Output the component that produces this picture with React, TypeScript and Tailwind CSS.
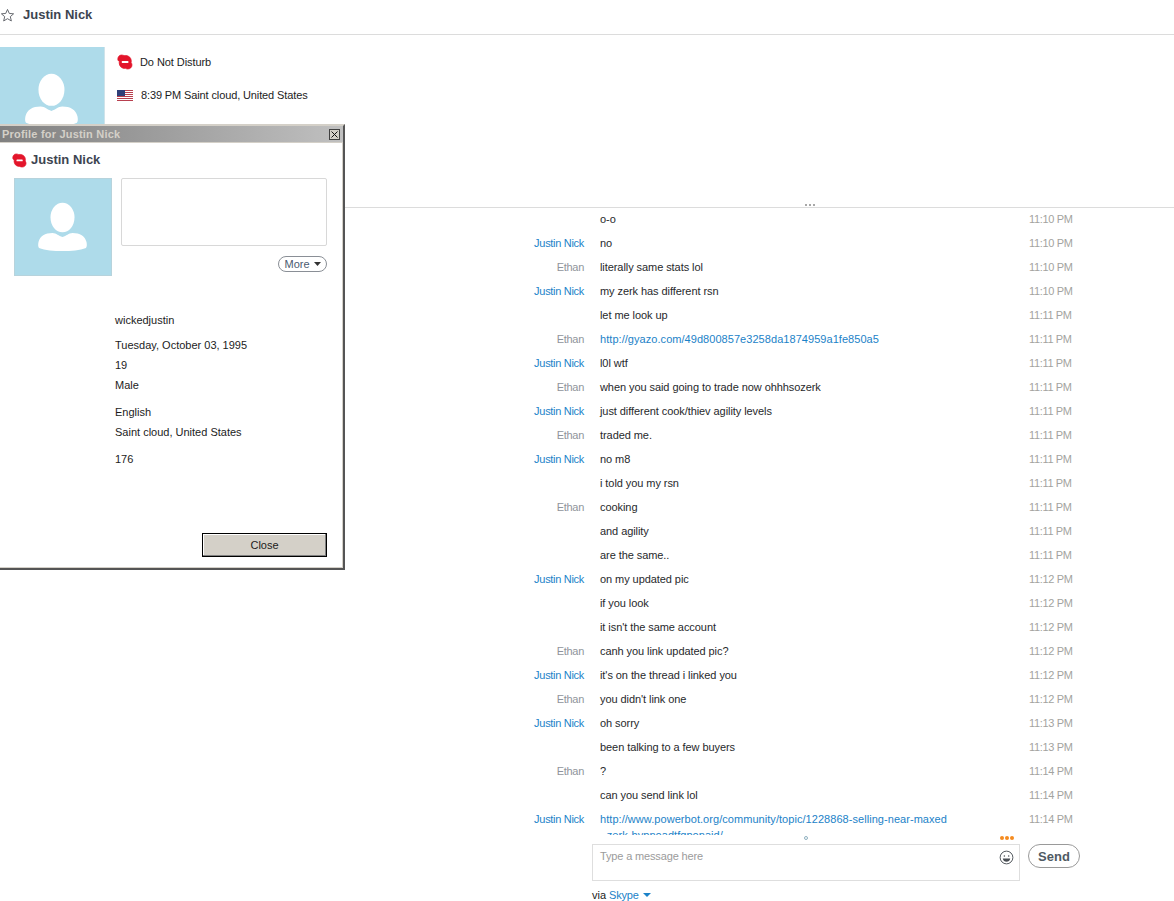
const F = "[font-family:'Liberation_Sans',sans-serif]";

type Msg = { n?: string; t: string; time: string; link?: boolean };
const J = 'Justin Nick';
const E = 'Ethan';
const msgs: Msg[] = [
  { t: 'o-o', time: '11:10 PM' },
  { n: J, t: 'no', time: '11:10 PM' },
  { n: E, t: 'literally same stats lol', time: '11:10 PM' },
  { n: J, t: 'my zerk has different rsn', time: '11:10 PM' },
  { t: 'let me look up', time: '11:11 PM' },
  { n: E, t: 'http://gyazo.com/49d800857e3258da1874959a1fe850a5', time: '11:11 PM', link: true },
  { n: J, t: 'l0l wtf', time: '11:11 PM' },
  { n: E, t: 'when you said going to trade now ohhhsozerk', time: '11:11 PM' },
  { n: J, t: 'just different cook/thiev agility levels', time: '11:11 PM' },
  { n: E, t: 'traded me.', time: '11:11 PM' },
  { n: J, t: 'no m8', time: '11:11 PM' },
  { t: 'i told you my rsn', time: '11:11 PM' },
  { n: E, t: 'cooking', time: '11:11 PM' },
  { t: 'and agility', time: '11:11 PM' },
  { t: 'are the same..', time: '11:11 PM' },
  { n: J, t: 'on my updated pic', time: '11:12 PM' },
  { t: 'if you look', time: '11:12 PM' },
  { t: "it isn't the same account", time: '11:12 PM' },
  { n: E, t: 'canh you link updated pic?', time: '11:12 PM' },
  { n: J, t: "it's on the thread i linked you", time: '11:12 PM' },
  { n: E, t: "you didn't link one", time: '11:12 PM' },
  { n: J, t: 'oh sorry', time: '11:13 PM' },
  { t: 'been talking to a few buyers', time: '11:13 PM' },
  { n: E, t: '?', time: '11:14 PM' },
  { t: 'can you send link lol', time: '11:14 PM' },
  { n: J, t: 'http://www.powerbot.org/community/topic/1228868-selling-near-maxed\n -zerk-hypnoadtfgponaid/', time: '11:14 PM', link: true },
];

function Dnd({ className }: { className: string }) {
  return (
    <svg viewBox="0 0 16 16" className={className}>
      <path
        fill="#e3152b"
        stroke="#e3152b"
        strokeWidth="0.7"
        d="M4.500 1c1 0 1.900.3 2.700.6C7.700 1.500 8.200 1.500 8.700 1.500c3.100 0 5.600 2.400 5.600 5.500 0 .5 0 1-.2 1.500.4.600.9 1.400.9 2.400 0 2.400-1.900 4.100-4.200 4.100-.9 0-1.800-.3-2.500-.7-.2 0-.4.100-.6.100-3.100 0-5.500-2.500-5.500-5.500 0-.5 0-.9.200-1.400C1.600 7.200.8 6.300.8 5.200.8 2.900 2.300 1 4.500 1z"
      />
      <rect x="4.800" y="6.900" width="6.600" height="2" rx="0.500" fill="#fff" />
    </svg>
  );
}

function Avatar({ className }: { className: string }) {
  return (
    <svg viewBox="0 0 96 96" className={className}>
      <ellipse cx="47.500" cy="39.500" rx="12" ry="14.800" fill="#fff" />
      <path
        fill="#fff"
        d="M47.500 59c4-1 6-4 10-4 7.500 0 12.500 3 14 9 .5 2.500.5 4.500-.5 6-6 2.500-15 3-23.500 3s-17.500-.5-23.500-3c-1-1.500-1-3.500-.5-6 1.500-6 6.500-9 14-9 4 0 6 3 10 4z"
      />
    </svg>
  );
}

function Flag() {
  return (
    <svg viewBox="0 0 16 11" className="w-4 h-[11px]">
      <rect width="16" height="11" fill="#fff" />
      <path d="M0 0h16v1H0zM0 2h16v1H0zM0 4h16v1H0zM0 6h16v1H0zM0 8h16v1H0zM0 10h16v1H0z" fill="#b8404f" />
      <rect width="8" height="6" fill="#2f3f78" />
    </svg>
  );
}

function Row({ m }: { m: Msg }) {
  return (
    <div className="flex min-h-6 leading-[16px] pt-[3px] text-[11px]">
      <div className={`w-[584px] shrink-0 text-right tracking-[-0.3px] ${m.n === J ? 'text-[#1b82c8]' : 'text-[#8f949b]'}`}>{m.n}</div>
      <div className={`w-[352px] shrink-0 ml-[16px] whitespace-pre-wrap ${m.link ? 'text-[#1b82c8] tracking-[0.05px]' : 'text-[#27292c] tracking-[-0.07px]'}`}>{m.t}</div>
      <div className="ml-[77px] text-[#a3a3a0] tracking-[-0.35px]">{m.time}</div>
    </div>
  );
}

export default function App() {
  return (
    <div className={`relative w-[1174px] h-[901px] overflow-hidden bg-white ${F} text-[11px] text-[#1c1c1c]`}>
      <header className="h-[35px] border-b border-[#dcdcdc] flex items-center">
        <svg viewBox="0 0 16 16" className="w-[15px] h-[15px] mb-1 text-[#5d6066]">
          <path d="M8 1.500l1.900 4.300 4.600.4-3.500 3 1.100 4.600L8 11.400l-4.100 2.400L5 9.200l-3.500-3 4.600-.4z" fill="none" stroke="currentColor" />
        </svg>
        <span className="ml-2 mb-1 text-[13px] font-bold text-[#3d4450]">Justin Nick</span>
      </header>

      <section className="h-[173px] border-b border-[#dcdcdc] flex pt-3 relative">
        <div className="w-[105px] h-[105px] bg-[#aedbea] border-r border-[#cfe3ea] flex">
          <Avatar className="w-[104px] h-[104px]" />
        </div>
        <div className="ml-3 pt-[7px]">
          <div className="flex items-center h-4">
            <Dnd className="w-4 h-4" />
            <span className="ml-[7px] tracking-[-0.07px]">Do Not Disturb</span>
          </div>
          <div className="flex items-center h-4 mt-[17px]">
            <Flag />
            <span className="ml-2 tracking-[-0.12px]">8:39 PM Saint cloud, United States</span>
          </div>
        </div>
        <div className="absolute left-[805px] top-[169px] flex gap-[2px]">
          <i className="w-[2px] h-[2px] bg-[#a8a8a8]" />
          <i className="w-[2px] h-[2px] bg-[#a8a8a8]" />
          <i className="w-[2px] h-[2px] bg-[#a8a8a8]" />
        </div>
      </section>

      <main className="h-[627px] overflow-hidden">
        {msgs.map((m, i) => (
          <Row key={i} m={m} />
        ))}
      </main>

      <footer className="relative pl-[592px] pt-[9px]">
        <i className="absolute left-[804px] top-[1px] w-1 h-1 rounded-full border border-[#8fb0c0]" />
        <div className="absolute left-[1000px] top-[1px] flex gap-[1px]">
          <i className="w-1 h-1 rounded-full bg-[#f58b1f]" />
          <i className="w-1 h-1 rounded-full bg-[#f58b1f]" />
          <i className="w-1 h-1 rounded-full bg-[#f58b1f]" />
        </div>
        <div className="flex">
          <div className="relative w-[428px] h-[37px] border border-[#dedede] pl-[7px] pt-[3px] text-[#9b9b9b] tracking-[-0.15px]">
            Type a message here
            <svg viewBox="0 0 16 16" className="absolute right-[5px] top-[5px] w-[15px] h-[15px]" fill="none" stroke="#4a4f55">
              <circle cx="8" cy="8" r="6.800" />
              <circle cx="5.700" cy="6.300" r="0.800" fill="#4a4f55" stroke="none" />
              <circle cx="10.300" cy="6.300" r="0.800" fill="#4a4f55" stroke="none" />
              <path d="M4 9h8c-.4 2.200-2 3.500-4 3.500S4.400 11.200 4 9z" fill="#4a4f55" stroke="none" />
            </svg>
          </div>
          <div className="ml-2 w-[52px] h-6 pt-px rounded-full border border-[#9a9a9a] flex items-center justify-center text-[13px] font-bold text-[#4f5a63]">Send</div>
        </div>
        <div className="mt-[6px] flex items-center h-4 text-[11px]">
          via <span className="ml-[3px] text-[#1b82c8] tracking-[-0.2px]">Skype</span>
          <svg viewBox="0 0 8 4" className="ml-[4px] w-2 h-1"><path d="M0 0h8L4 4z" fill="#1b82c8" /></svg>
        </div>
      </footer>

      <div className="absolute -left-[2px] top-[124px] w-[347px] h-[446px] bg-white border-t-2 border-[#d4d0c8] border-r-2 border-b-2 border-r-[#555] border-b-[#555] shadow-[inset_-1px_-1px_0_#d4d0c8] flex flex-col">
        <div className="h-[17px] flex items-center justify-between pl-1 pr-[3px] bg-gradient-to-r from-[#808080] to-[#c0c0c0] border-b border-[#d4d0c8]">
          <span className="font-bold text-[11px] tracking-[0.2px] text-[#d4d0c8]">Profile for Justin Nick</span>
          <span className="w-[11px] h-[11px] bg-[#d4d0c8] border border-[#404040] flex items-center justify-center">
            <svg viewBox="0 0 7 7" className="w-[7px] h-[7px]"><path d="M0.500 0.500l6 6M6.500 0.500l-6 6" stroke="#111" /></svg>
          </span>
        </div>
        <div className="flex items-center pl-[14px] pt-[6px] h-[26px] mt-[1px]">
          <Dnd className="w-[15px] h-[15px]" />
          <span className="ml-[4px] text-[13px] font-bold text-[#3d4450]">Justin Nick</span>
        </div>
        <div className="flex pl-4 mt-[8px]">
          <div className="w-[98px] h-[98px] bg-[#aedbea] border border-[#b7d3dc] shrink-0">
            <Avatar className="w-[96px] h-[96px] -translate-y-px" />
          </div>
          <div className="ml-[9px]">
            <div className="w-[206px] h-[68px] border border-[#d8d8d8] rounded-[2px]" />
            <div className="mt-[10px] w-[49px] h-4 border border-[#8a8f96] rounded-full flex items-center justify-center text-[11px] text-[#4a5a70] ml-[157px]">
              More
              <svg viewBox="0 0 7 4" className="ml-1 w-[7px] h-1"><path d="M0 0h7L3.500 4z" fill="#333" /></svg>
            </div>
          </div>
        </div>
        <div className="ml-[117px] mt-[34px] leading-[20px] text-[11px]">
          <div>wickedjustin</div>
          <div className="mt-[5px]">Tuesday, October 03, 1995</div>
          <div>19</div>
          <div>Male</div>
          <div className="mt-[7px]">English</div>
          <div>Saint cloud, United States</div>
          <div className="mt-[7px]">176</div>
        </div>
        <div className="mt-auto mb-[11px] ml-[204px] w-[125px] h-6 bg-[#d4d0c8] border border-black shadow-[inset_-1px_-1px_0_#808080,inset_1px_1px_0_#fff] flex items-center justify-center text-[11px]">
          Close
        </div>
      </div>
    </div>
  );
}
